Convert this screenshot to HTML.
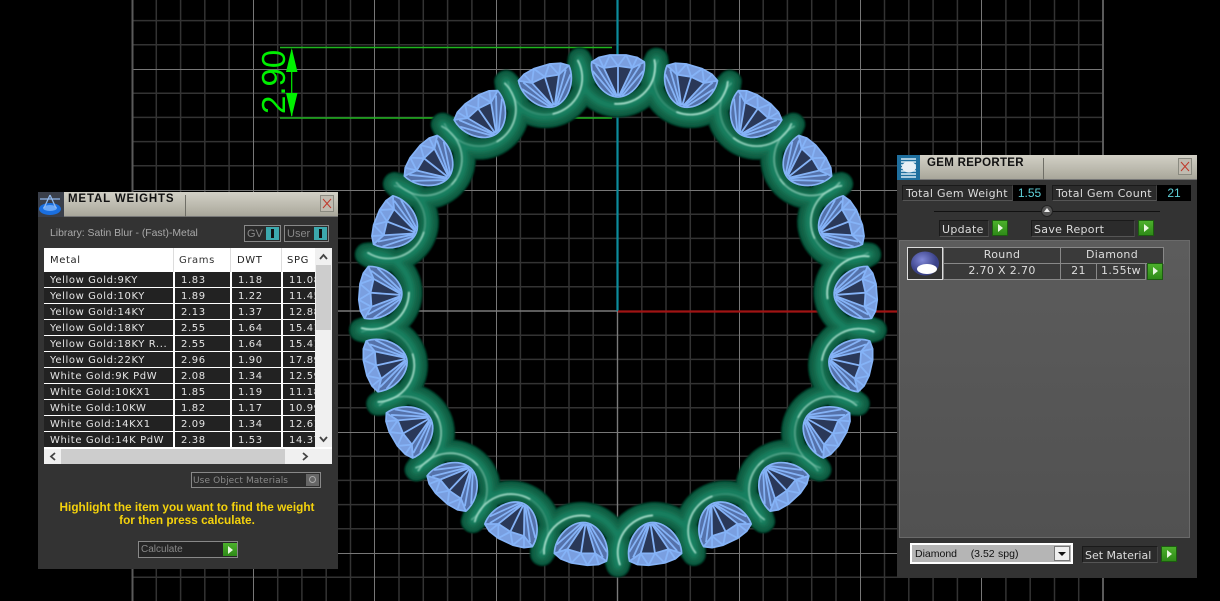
<!DOCTYPE html>
<html><head><meta charset="utf-8">
<style>
html,body{margin:0;padding:0;background:#000;width:1220px;height:601px;overflow:hidden}
#s{position:absolute;left:0;top:0}
.p{position:absolute;background:#333;font-family:"DejaVu Sans",sans-serif}
.a{position:absolute;box-sizing:border-box;white-space:nowrap}
.title{left:0;top:0;height:25px;right:0;background:linear-gradient(#d2d0c6,#b6b4a8 70%,#a8a69a);border-bottom:1px solid #777}
.tt{font:bold 11.5px/14px "Liberation Sans",sans-serif;color:#111}
.close{width:14px;height:17px;background:#c0bbb0;border:1px solid #8a8a80}
.cell{background:#222;color:#e6e6e6;font-size:10px;line-height:17px;letter-spacing:.6px;height:15px;overflow:hidden}
.hd{background:#fff;color:#222;font-size:10px;line-height:25px;letter-spacing:.6px;height:24px}
.g{width:16px;height:16px;background:linear-gradient(#4cb02c,#2f8a18);border:1px solid #1c5c10}
.g:after{content:"";position:absolute;left:5px;top:3px;border-left:5px solid #e8f6e0;border-top:4px solid transparent;border-bottom:4px solid transparent}
.lab{background:#2b2b2b;border:1px solid #1a1a1a;color:#ddd;font-size:11px;line-height:16px;letter-spacing:.3px;border-right-color:#444;border-bottom-color:#555}
.val{background:#000;color:#5fd0d8;font:12px/17px "Liberation Sans",sans-serif;text-align:center}
.tc{background:#3a3a3a;border:1px solid #888;color:#ddd;font-size:11px;line-height:14px;text-align:center;letter-spacing:.35px}
</style></head>
<body>
<svg id="s" width="1220" height="601" viewBox="0 0 1220 601" xmlns="http://www.w3.org/2000/svg">
<defs>
<path id="a" fill="none" stroke-linecap="round" d="M-38.4 -252A39.2 39.2 0 1 0 38.4 -252"/>
<path id="hA" fill="none" stroke-linecap="round" d="M-3 -207.2A37 37 0 0 0 36 -251"/>
<path id="hB" fill="none" stroke-linecap="round" d="M3 -207.2A37 37 0 0 1 -36 -251"/>
<g id="gem">
<path d="M-26 -249L-19 -253.5L-8 -256L8 -256L19 -253.5L26 -249C28 -232 14 -214 0 -214C-14 -214 -28 -232 -26 -249Z" fill="#2a3858"/>
<path d="M-26 -249L-19 -253.5L-8 -256L8 -256L19 -253.5L26 -249L14 -243L0 -245L-14 -243Z" fill="#7a9fe0"/>
<path d="M-26 -249L-14 -243L-2 -215C-14 -216 -28 -232 -26 -249ZM26 -249L14 -243L2 -215C14 -216 28 -232 26 -249Z" fill="#5572aa"/>
<path d="M-26 -249L-19 -253.5L-8 -256L8 -256L19 -253.5L26 -249C28 -232 14 -214 0 -214C-14 -214 -28 -232 -26 -249Z" fill="none" stroke="#85b3f7" stroke-width="1.7" stroke-linejoin="round"/>
<path d="M-26 -249L-14 -243L0 -245L14 -243L26 -249M-19 -253.5L-14 -243M-8 -256L-14 -243M-8 -256L0 -245L8 -256M19 -253.5L14 -243M8 -256L14 -243M0 -245L0 -215M-14 -243L-1 -215M14 -243L1 -215M-22 -246L-2 -215M22 -246L2 -215M-25 -240L-4 -215M25 -240L4 -215" fill="none" stroke="#85b3f7" stroke-width="1.8"/>
</g>
<g id="R">
<use href="#a"/><use href="#a" transform="rotate(17.143)"/><use href="#a" transform="rotate(34.286)"/><use href="#a" transform="rotate(51.429)"/><use href="#a" transform="rotate(68.571)"/><use href="#a" transform="rotate(85.714)"/><use href="#a" transform="rotate(102.857)"/><use href="#a" transform="rotate(120)"/><use href="#a" transform="rotate(137.143)"/><use href="#a" transform="rotate(154.286)"/><use href="#a" transform="rotate(171.429)"/><use href="#a" transform="rotate(188.571)"/><use href="#a" transform="rotate(205.714)"/><use href="#a" transform="rotate(222.857)"/><use href="#a" transform="rotate(240)"/><use href="#a" transform="rotate(257.143)"/><use href="#a" transform="rotate(274.286)"/><use href="#a" transform="rotate(291.429)"/><use href="#a" transform="rotate(308.571)"/><use href="#a" transform="rotate(325.714)"/><use href="#a" transform="rotate(342.857)"/>
</g>
<filter id="b1" x="-5%" y="-5%" width="110%" height="110%"><feGaussianBlur stdDeviation=".8"/></filter>
<filter id="b2" x="-5%" y="-5%" width="110%" height="110%"><feGaussianBlur stdDeviation="1.8"/></filter>
<filter id="b3" x="-5%" y="-5%" width="110%" height="110%"><feGaussianBlur stdDeviation=".7"/></filter>
</defs>
<path fill="none" stroke="#333" stroke-width="1.5" d="M156.3 0V601M180.6 0V601M204.8 0V601M229.1 0V601M277.7 0V601M301.9 0V601M326.2 0V601M350.5 0V601M399 0V601M423.3 0V601M447.6 0V601M471.9 0V601M520.4 0V601M544.7 0V601M569 0V601M593.2 0V601M641.8 0V601M666 0V601M690.3 0V601M714.6 0V601M763.2 0V601M787.4 0V601M811.7 0V601M836 0V601M884.5 0V601M908.8 0V601M933.1 0V601M957.4 0V601M1005.9 0V601M1030.2 0V601M1054.5 0V601M1078.7 0V601
M132 20.6H1103M132 44.8H1103M132 93.2H1103M132 117.4H1103M132 141.6H1103M132 165.8H1103M132 214.2H1103M132 238.4H1103M132 262.6H1103M132 286.8H1103M132 335.2H1103M132 359.4H1103M132 383.6H1103M132 407.8H1103M132 456.2H1103M132 480.4H1103M132 504.6H1103M132 528.8H1103M132 577.2H1103"/>
<path fill="none" stroke="#777" stroke-width="1" d="M253.5 0V601M374.5 0V601M496.5 0V601M739.5 0V601M860.5 0V601M981.5 0V601M132 69.5H1103M132 190.5H1103M132 432.5H1103M132 553.5H1103"/>
<path fill="none" stroke="#5a5a5a" stroke-width="2" d="M132.5 0V601M1103 0V601"/>
<path fill="none" stroke="#7a7a7a" stroke-width="1.4" d="M132 311H617M617.5 311V601"/>
<path fill="none" stroke="#0c8c9c" stroke-width="2.2" d="M617.5 0V311"/>
<path fill="none" stroke="#a01414" stroke-width="2.2" d="M618 311.5H900"/>
<path fill="none" stroke="#1fb51f" stroke-width="1.4" d="M280 47.5H612M280 118H612"/>
<path fill="none" stroke="#00ee00" stroke-width="1.2" d="M291.7 50V116"/>
<path fill="#00f000" d="M291.7 48L297.5 72H286ZM291.7 117L297.5 93H286Z"/>
<text transform="translate(285,114) rotate(-90)" font-family="Liberation Sans,sans-serif" font-size="33" fill="#00f000">2.90</text>

<g transform="translate(618,311) scale(1.013,1)">
<use href="#R" stroke="#063a28" stroke-width="23" filter="url(#b1)"/>
<use href="#R" stroke="#0c5a3f" stroke-width="20" filter="url(#b1)"/>
<use href="#R" stroke="#12694c" stroke-width="14" filter="url(#b2)"/>
<use href="#R" stroke="#178060" stroke-width="6" filter="url(#b2)"/>
<g stroke="#c8f5e4" stroke-width="1.8" filter="url(#b3)" opacity=".85">
<use href="#hA" opacity="1"/>
<use href="#hA" transform="rotate(17.143)" opacity=".96"/><use href="#hB" transform="rotate(17.143)" opacity=".2"/>
<use href="#hA" transform="rotate(34.286)" opacity=".83"/><use href="#hB" transform="rotate(34.286)" opacity=".3"/>
<use href="#hA" transform="rotate(51.429)" opacity=".62"/><use href="#hB" transform="rotate(51.429)" opacity=".5"/>
<use href="#hA" transform="rotate(68.571)" opacity=".3"/><use href="#hB" transform="rotate(68.571)" opacity=".8"/>
<use href="#hB" transform="rotate(85.714)" opacity="1"/>
<use href="#hA" transform="rotate(102.857)" opacity=".2"/><use href="#hB" transform="rotate(102.857)" opacity=".9"/>
<use href="#hA" transform="rotate(120)" opacity=".4"/><use href="#hB" transform="rotate(120)" opacity=".7"/>
<use href="#hA" transform="rotate(137.143)" opacity=".73"/><use href="#hB" transform="rotate(137.143)" opacity=".4"/>
<use href="#hA" transform="rotate(154.286)" opacity=".9"/><use href="#hB" transform="rotate(154.286)" opacity=".2"/>
<use href="#hA" transform="rotate(171.429)" opacity=".99"/>
<use href="#hA" transform="rotate(188.571)" opacity=".99"/>
<use href="#hA" transform="rotate(205.714)" opacity=".9"/><use href="#hB" transform="rotate(205.714)" opacity=".2"/>
<use href="#hA" transform="rotate(222.857)" opacity=".73"/><use href="#hB" transform="rotate(222.857)" opacity=".4"/>
<use href="#hA" transform="rotate(240)" opacity=".4"/><use href="#hB" transform="rotate(240)" opacity=".7"/>
<use href="#hA" transform="rotate(257.143)" opacity=".2"/><use href="#hB" transform="rotate(257.143)" opacity=".9"/>
<use href="#hB" transform="rotate(274.286)" opacity="1"/>
<use href="#hA" transform="rotate(291.429)" opacity=".3"/><use href="#hB" transform="rotate(291.429)" opacity=".8"/>
<use href="#hA" transform="rotate(308.571)" opacity=".62"/><use href="#hB" transform="rotate(308.571)" opacity=".5"/>
<use href="#hA" transform="rotate(325.714)" opacity=".83"/><use href="#hB" transform="rotate(325.714)" opacity=".3"/>
<use href="#hA" transform="rotate(342.857)" opacity=".96"/><use href="#hB" transform="rotate(342.857)" opacity=".2"/>
</g>
<use href="#gem"/><use href="#gem" transform="rotate(17.143)"/><use href="#gem" transform="rotate(34.286)"/><use href="#gem" transform="rotate(51.429)"/><use href="#gem" transform="rotate(68.571)"/><use href="#gem" transform="rotate(85.714)"/><use href="#gem" transform="rotate(102.857)"/><use href="#gem" transform="rotate(120)"/><use href="#gem" transform="rotate(137.143)"/><use href="#gem" transform="rotate(154.286)"/><use href="#gem" transform="rotate(171.429)"/><use href="#gem" transform="rotate(188.571)"/><use href="#gem" transform="rotate(205.714)"/><use href="#gem" transform="rotate(222.857)"/><use href="#gem" transform="rotate(240)"/><use href="#gem" transform="rotate(257.143)"/><use href="#gem" transform="rotate(274.286)"/><use href="#gem" transform="rotate(291.429)"/><use href="#gem" transform="rotate(308.571)"/><use href="#gem" transform="rotate(325.714)"/><use href="#gem" transform="rotate(342.857)"/>
</g>
</svg>

<!-- METAL WEIGHTS -->
<div class="p" style="left:38px;top:192px;width:300px;height:377px">
<div class="a title"></div>
<svg class="a" style="left:0;top:0" width="26" height="25"><rect width="26" height="25" fill="#3a3f4a"/><ellipse cx="12" cy="17" rx="11" ry="6" fill="#1a6fe0"/><ellipse cx="12" cy="16" rx="7" ry="3" fill="#6aa8f8"/><path d="M12 3L6 16M12 3L18 16M2 7H22" stroke="#8fb8ee" stroke-width="1.3" fill="none"/></svg>
<div class="a tt" style="left:30px;top:0;letter-spacing:.85px">METAL WEIGHTS</div>
<div class="a" style="left:147px;top:3px;width:1px;height:22px;background:#6f6e66"></div>
<div class="a close" style="left:282px;top:3px"><svg width="12" height="15" style="display:block"><path d="M2 3L10 12M10 3L2 12" stroke="#c0392b" stroke-width="1" fill="none"/></svg></div>
<div class="a" style="left:12px;top:35px;font:10.4px/13px 'Liberation Sans',sans-serif;color:#aaa">Library: Satin Blur - (Fast)-Metal</div>
<div class="a" style="left:206px;top:33px;width:37px;height:17px;border:1px solid #888;background:#2a2a2a;color:#888;font:11px/17px 'Liberation Sans',sans-serif;padding-left:2px">GV<div class="a" style="left:21px;top:1px;width:13px;height:13px;background:#3ca8ad"><div class="a" style="left:5px;top:2px;width:3px;height:9px;background:#111"></div></div></div>
<div class="a" style="left:246px;top:33px;width:45px;height:17px;border:1px solid #888;background:#2a2a2a;color:#888;font:11px/17px 'Liberation Sans',sans-serif;padding-left:2px">User<div class="a" style="left:29px;top:1px;width:13px;height:13px;background:#3ca8ad"><div class="a" style="left:5px;top:2px;width:3px;height:9px;background:#111"></div></div></div>
<!-- table -->
<div class="a" style="left:6px;top:56px;width:288px;height:216px;background:#fff;overflow:hidden">
<div class="a hd" style="left:6px;top:0">Metal</div>
<div class="a hd" style="left:135px;top:0;color:#333">Grams</div>
<div class="a hd" style="left:193px;top:0">DWT</div>
<div class="a hd" style="left:243px;top:0">SPG</div>
<div class="a" style="left:129px;top:0;width:1px;height:24px;background:#ddd"></div>
<div class="a" style="left:186px;top:0;width:1px;height:24px;background:#ddd"></div>
<div class="a" style="left:237px;top:0;width:1px;height:24px;background:#ddd"></div>
<style>.r{position:absolute;left:0;width:271px;height:15px}.r div{position:absolute;top:0;padding-left:6px;box-sizing:border-box}.r div:nth-child(1){left:0;width:129px}.r div:nth-child(2){left:131px;width:55px}.r div:nth-child(3){left:188px;width:49px}.r div:nth-child(4){left:239px;width:32px}</style>
<div class="r" style="top:24px"><div class="cell">Yellow Gold:9KY</div><div class="cell">1.83</div><div class="cell">1.18</div><div class="cell">11.08</div></div>
<div class="r" style="top:40px"><div class="cell">Yellow Gold:10KY</div><div class="cell">1.89</div><div class="cell">1.22</div><div class="cell">11.45</div></div>
<div class="r" style="top:56px"><div class="cell">Yellow Gold:14KY</div><div class="cell">2.13</div><div class="cell">1.37</div><div class="cell">12.88</div></div>
<div class="r" style="top:72px"><div class="cell">Yellow Gold:18KY</div><div class="cell">2.55</div><div class="cell">1.64</div><div class="cell">15.41</div></div>
<div class="r" style="top:88px"><div class="cell">Yellow Gold:18KY R...</div><div class="cell">2.55</div><div class="cell">1.64</div><div class="cell">15.41</div></div>
<div class="r" style="top:104px"><div class="cell">Yellow Gold:22KY</div><div class="cell">2.96</div><div class="cell">1.90</div><div class="cell">17.89</div></div>
<div class="r" style="top:120px"><div class="cell">White Gold:9K PdW</div><div class="cell">2.08</div><div class="cell">1.34</div><div class="cell">12.59</div></div>
<div class="r" style="top:136px"><div class="cell">White Gold:10KX1</div><div class="cell">1.85</div><div class="cell">1.19</div><div class="cell">11.18</div></div>
<div class="r" style="top:152px"><div class="cell">White Gold:10KW</div><div class="cell">1.82</div><div class="cell">1.17</div><div class="cell">10.99</div></div>
<div class="r" style="top:168px"><div class="cell">White Gold:14KX1</div><div class="cell">2.09</div><div class="cell">1.34</div><div class="cell">12.61</div></div>
<div class="r" style="top:184px"><div class="cell">White Gold:14K PdW</div><div class="cell">2.38</div><div class="cell">1.53</div><div class="cell">14.37</div></div>
<!-- v scrollbar -->
<div class="a" style="left:271px;top:0;width:17px;height:199px;background:#f0f0f0"></div>
<div class="a" style="left:272px;top:17px;width:15px;height:65px;background:#cdcdcd"></div>
<svg class="a" style="left:271px;top:0" width="17" height="199"><path d="M5 11L8.5 7L12 11" fill="none" stroke="#444" stroke-width="1.8"/><path d="M5 189L8.5 193L12 189" fill="none" stroke="#444" stroke-width="1.8"/></svg>
<!-- h scrollbar -->
<div class="a" style="left:0;top:201px;width:288px;height:15px;background:#f0f0f0"></div>
<div class="a" style="left:17px;top:201px;width:224px;height:15px;background:#cdcdcd"></div>
<svg class="a" style="left:0;top:201px" width="288" height="15"><path d="M11 4L7 7.5L11 11" fill="none" stroke="#444" stroke-width="1.8"/><path d="M259 4L263 7.5L259 11" fill="none" stroke="#444" stroke-width="1.8"/></svg>
</div>
<div class="a" style="left:153px;top:280px;width:130px;height:16px;border:1px solid #888;background:#2c2c2c;color:#8a8a8a;font-size:9px;line-height:16px;padding-left:1px;letter-spacing:.1px">Use Object Materials<div class="a" style="right:1px;top:1px;width:13px;height:12px;background:#666"><div class="a" style="left:3px;top:2px;width:7px;height:7px;border:1px solid #aaa;border-radius:50%"></div></div></div>
<div class="a" style="left:0;top:309px;width:298px;text-align:center;font:bold 11.8px/13px 'Liberation Sans',sans-serif;color:#f4d20c;white-space:normal">Highlight the item you want to find the weight<br>for then press calculate.</div>
<div class="a" style="left:100px;top:349px;width:100px;height:17px;border:1px solid #888;background:#252525;color:#888;font:10px/15px 'Liberation Sans',sans-serif;padding-left:2px">Calculate<div class="a g" style="left:84px;top:1px;width:14px;height:13px;border:0"></div></div>
</div>

<!-- GEM REPORTER -->
<div class="p" style="left:897px;top:155px;width:300px;height:423px">
<div class="a title"></div>
<svg class="a" style="left:0;top:0" width="23" height="25"><rect width="23" height="25" fill="#1f6f9e"/><path d="M4 4H19M4 7H19M4 10H19M4 13H19M4 16H19M4 19H19M4 22H19" stroke="#d8ecf6" stroke-width="1.5"/><ellipse cx="12" cy="12" rx="7" ry="5.5" fill="#e8f0f6"/></svg>
<div class="a tt" style="left:30px;top:1px;letter-spacing:.3px">GEM REPORTER</div>
<div class="a" style="left:146px;top:3px;width:1px;height:22px;background:#6f6e66"></div>
<div class="a close" style="left:281px;top:3px"><svg width="12" height="15" style="display:block"><path d="M2 3L10 12M10 3L2 12" stroke="#c0392b" stroke-width="1" fill="none"/></svg></div>
<div class="a lab" style="left:5px;top:30px;width:111px;height:16px;padding-left:3px">Total Gem Weight</div>
<div class="a val" style="left:116px;top:30px;width:33px;height:16px">1.55</div>
<div class="a lab" style="left:155px;top:30px;width:105px;height:16px;padding-left:3px">Total Gem Count</div>
<div class="a val" style="left:260px;top:30px;width:34px;height:16px">21</div>
<div class="a" style="left:37px;top:56px;width:226px;height:1px;background:#111"></div>
<div class="a" style="left:144px;top:50px;width:12px;height:12px;border-radius:50%;background:#555;border:1px solid #222"><div class="a" style="left:2px;top:2px;border-left:3px solid transparent;border-right:3px solid transparent;border-bottom:4px solid #eee"></div></div>
<div class="a lab" style="left:42px;top:65px;width:50px;height:17px;padding-left:2px;line-height:17px">Update</div>
<div class="a g" style="left:95px;top:65px"></div>
<div class="a lab" style="left:134px;top:65px;width:104px;height:17px;padding-left:2px;line-height:17px">Save Report</div>
<div class="a g" style="left:241px;top:65px"></div>
<div class="a" style="left:2px;top:85px;width:291px;height:298px;background:linear-gradient(#5c5c5c,#515151);border:1px solid #6a6a6a"></div>
<div class="a" style="left:10px;top:92px;width:36px;height:33px;border:1px solid #ddd;background:#333"></div>
<svg class="a" style="left:11px;top:93px" width="34" height="31"><defs><radialGradient id="gg" cx=".4" cy=".35"><stop offset="0" stop-color="#8088d8"/><stop offset="1" stop-color="#3b4288"/></radialGradient></defs><ellipse cx="17" cy="15.5" rx="14" ry="12" fill="url(#gg)"/><ellipse cx="19" cy="21" rx="10" ry="5" fill="#fff"/></svg>
<div class="a tc" style="left:46px;top:92px;width:118px;height:17px">Round</div>
<div class="a tc" style="left:163px;top:92px;width:104px;height:17px">Diamond</div>
<div class="a tc" style="left:46px;top:108px;width:118px;height:17px">2.70 X 2.70</div>
<div class="a tc" style="left:163px;top:108px;width:37px;height:17px">21</div>
<div class="a tc" style="left:199px;top:108px;width:50px;height:17px">1.55tw</div>
<div class="a g" style="left:250px;top:108px;height:17px"></div>
<div class="a" style="left:13px;top:388px;width:163px;height:21px;background:#fff;padding:2px"><div style="background:#b5b5b5;height:17px;font:10.5px/19px 'Liberation Sans',sans-serif;color:#111;padding-left:3px;white-space:pre;word-spacing:.5px">Diamond    (3.52 spg)</div><div class="a" style="right:3px;top:3px;width:16px;height:15px;background:#eee;border:1px solid #777"><div class="a" style="left:3px;top:5px;border-left:4px solid transparent;border-right:4px solid transparent;border-top:4px solid #111"></div></div></div>
<div class="a lab" style="left:185px;top:391px;width:76px;height:17px;padding-left:2px;line-height:17px;letter-spacing:0">Set Material</div>
<div class="a g" style="left:264px;top:391px"></div>
</div>
</body></html>
